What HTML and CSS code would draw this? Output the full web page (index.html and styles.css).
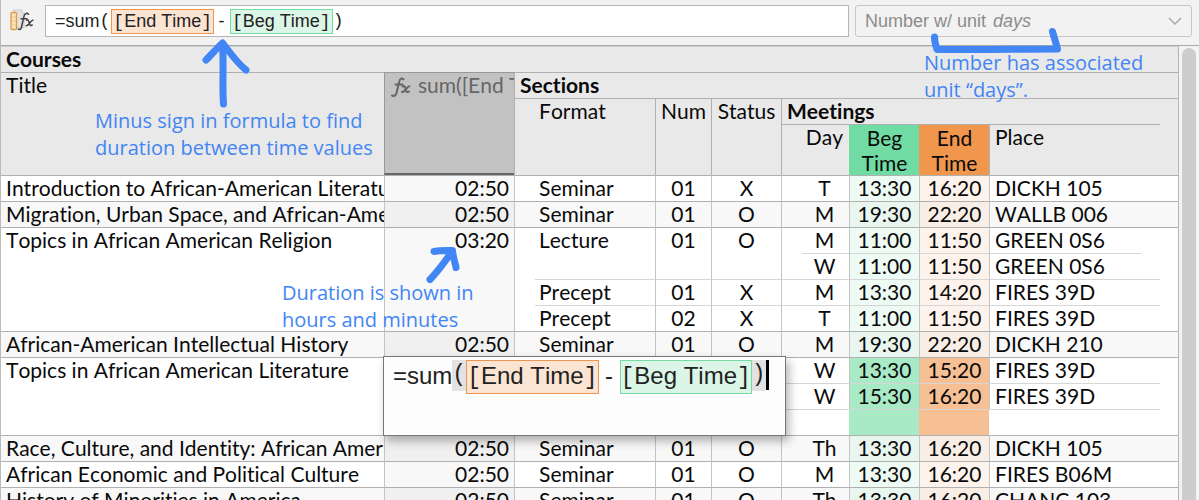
FILE: index.html
```html
<!DOCTYPE html>
<html lang="en">
<head>
<meta charset="utf-8">
<title>Courses</title>
<link rel="stylesheet" href="styles.css">
</head>
<body>
<div class="app">
  <header class="toolbar">
    <svg class="fx-icon" viewBox="0 0 24 24" aria-hidden="true">
      <path d="M3 1h9v3h2v15H6" fill="#e2e2e2" stroke="#c8c8c8"/>
      <rect x="1" y="3.500" width="5.500" height="17" rx="1" fill="#fbe3b4" stroke="#d99b45" stroke-width="1.300"/>
      <path d="M2 8h4M2 12h4M2 16h4" stroke="#efc98c"/>
      <path d="M18.500 5.200c-1.500-1.600-3.700-1-4.500 2L11.500 18c-.6 2.500-1.800 3-3.200 2.200M11 9.800h6" fill="none" stroke="#444" stroke-width="1.500" stroke-linecap="round"/>
      <path d="M16.500 11.200c1.500-1 2 0 2.500 2.300s1 3.700 3.200 2.500M23 11.200c-2-.8-3.800 5.700-6.800 5.500" fill="none" stroke="#444" stroke-width="1.500" stroke-linecap="round"/>
    </svg>
    <div class="formula bar-formula" role="textbox" contenteditable="true" spellcheck="false" aria-label="Formula"><span>=sum</span><span class="mono">(</span><span class="chip end"><span class="mono">[</span>End Time<span class="mono">]</span></span><span class="minus">-</span><span class="chip beg"><span class="mono">[</span>Beg Time<span class="mono">]</span></span><span class="mono">)</span></div>
    <div class="unit">
      <select aria-label="Number format"><option>Number w/ unit</option></select>
      <em>days</em>
      <svg class="chevron" viewBox="0 0 14 8" aria-hidden="true"><path d="M1 1l6 6 6-6" fill="none" stroke="#aaa" stroke-width="1.500"/></svg>
    </div>
  </header>

  <main class="sheet">
    <table>
      <colgroup><col class="w-title"><col class="w-sum"><col class="w-format"><col class="w-num"><col class="w-status"><col class="w-day"><col class="w-time"><col class="w-time"><col></colgroup>
      <thead>
        <tr><th colspan="9" class="group">Courses</th></tr>
        <tr><th rowspan="3">Title</th><th rowspan="3" class="sum"><div class="clip"><svg class="fx" viewBox="0 0 20 22" aria-hidden="true"><path d="M12.500 3.300c-1.500-1.700-3.600-.8-4.300 2.500L5.500 17c-.6 2.800-2.200 3.600-4.500 2.500M4.500 8.500h7" fill="none" stroke="#666" stroke-width="2" stroke-linecap="round"/><path d="M11.500 10.500c2-1 2.500 0 3 2.500s1.500 4 3.500 2.500M18.500 10.300c-2.300-.6-4.300 6-7.500 5.700" fill="none" stroke="#666" stroke-width="2" stroke-linecap="round"/></svg>sum([End Time]</div></th><th colspan="7" class="group">Sections</th></tr>
        <tr><th rowspan="2" class="format">Format</th><th rowspan="2" class="mid">Num</th><th rowspan="2" class="mid">Status</th><th colspan="4" class="group">Meetings</th></tr>
        <tr class="leaf"><th class="day">Day</th><th class="beg">Beg Time</th><th class="end">End Time</th><th class="place short">Place</th></tr>
      </thead>
      <tbody>
        <tr><td>Introduction to African-American Literature</td><td class="sum">02:50</td><td class="format">Seminar</td><td class="mid">01</td><td class="mid">X</td><td class="day">T</td><td class="beg">13:30</td><td class="end">16:20</td><td>DICKH 105</td></tr>
      </tbody>
      <tbody class="alt">
        <tr><td>Migration, Urban Space, and African-American Literature</td><td class="sum">02:50</td><td class="format">Seminar</td><td class="mid">01</td><td class="mid">O</td><td class="day">M</td><td class="beg">19:30</td><td class="end">22:20</td><td>WALLB 006</td></tr>
      </tbody>
      <tbody>
        <tr><td rowspan="4">Topics in African American Religion</td><td rowspan="4" class="sum">03:20</td><td rowspan="2" class="format">Lecture</td><td rowspan="2" class="mid">01</td><td rowspan="2" class="mid">O</td><td class="day">M</td><td class="beg">11:00</td><td class="end">11:50</td><td>GREEN 0S6</td></tr>
        <tr class="inner"><td class="day inset">W</td><td class="beg">11:00</td><td class="end">11:50</td><td class="shorter">GREEN 0S6</td></tr>
        <tr class="inner"><td class="format inset">Precept</td><td class="mid">01</td><td class="mid">X</td><td class="day">M</td><td class="beg">13:30</td><td class="end">14:20</td><td class="short">FIRES 39D</td></tr>
        <tr class="inner"><td class="format inset">Precept</td><td class="mid">02</td><td class="mid">X</td><td class="day">T</td><td class="beg">11:00</td><td class="end">11:50</td><td class="short">FIRES 39D</td></tr>
      </tbody>
      <tbody class="alt">
        <tr><td>African-American Intellectual History</td><td class="sum">02:50</td><td class="format">Seminar</td><td class="mid">01</td><td class="mid">O</td><td class="day">M</td><td class="beg">19:30</td><td class="end">22:20</td><td>DICKH 210</td></tr>
      </tbody>
      <tbody class="current">
        <tr><td rowspan="3">Topics in African American Literature</td><td rowspan="3" class="sum"></td><td class="format"></td><td class="mid"></td><td class="mid"></td><td class="day">W</td><td class="beg">13:30</td><td class="end">15:20</td><td>FIRES 39D</td></tr>
        <tr class="inner"><td class="format inset"></td><td class="mid"></td><td class="mid"></td><td class="day">W</td><td class="beg">15:30</td><td class="end">16:20</td><td class="short">FIRES 39D</td></tr>
        <tr class="inner blank"><td class="format inset"></td><td class="mid"></td><td class="mid"></td><td class="day"></td><td class="beg"></td><td class="end"></td><td class="short"></td></tr>
      </tbody>
      <tbody class="alt">
        <tr><td>Race, Culture, and Identity: African American History</td><td class="sum">02:50</td><td class="format">Seminar</td><td class="mid">01</td><td class="mid">O</td><td class="day">Th</td><td class="beg">13:30</td><td class="end">16:20</td><td>DICKH 105</td></tr>
      </tbody>
      <tbody>
        <tr><td>African Economic and Political Culture</td><td class="sum">02:50</td><td class="format">Seminar</td><td class="mid">01</td><td class="mid">O</td><td class="day">M</td><td class="beg">13:30</td><td class="end">16:20</td><td>FIRES B06M</td></tr>
      </tbody>
      <tbody class="alt">
        <tr><td>History of Minorities in America</td><td class="sum">02:50</td><td class="format">Seminar</td><td class="mid">01</td><td class="mid">O</td><td class="day">Th</td><td class="beg">13:30</td><td class="end">16:20</td><td>CHANC 103</td></tr>
      </tbody>
    </table>
    <div class="scrollbar" aria-hidden="true"><div class="thumb"></div></div>
  </main>

  <div class="formula popup" role="textbox" contenteditable="true" spellcheck="false" aria-label="Cell formula"><span>=sum</span><span class="mono match">(</span><span class="chip end"><span class="mono">[</span>End Time<span class="mono">]</span></span><span class="minus">-</span><span class="chip beg"><span class="mono">[</span>Beg Time<span class="mono">]</span></span><span class="mono match">)</span><span class="caret"></span></div>

  <svg class="strokes" width="1200" height="500" viewBox="0 0 1200 500" aria-hidden="true">
    <g fill="none" stroke="#4285f4" stroke-width="7" stroke-linecap="round" stroke-linejoin="round">
      <path d="M223.500 104C222 84 224 66 222.500 44M206 60C212 54 218 47 222.500 43C229 51 236 62 246 70"/>
      <path d="M430 279.500C440 269 446 260 452 251.500M434 251.500C441 250 446 250.500 452.500 250.500C453 257 455 262 456 267.500"/>
      <path d="M934.500 37C934.500 42 935.500 45 937 49.500C970 50 1020 49 1057.500 49C1056 43 1054 37 1052.500 31.500"/>
    </g>
  </svg>
  <p class="note note-minus">Minus sign in formula to find<br>duration between time values</p>
  <p class="note note-unit">Number has associated<br>unit “days”.</p>
  <p class="note note-duration">Duration is shown in<br>hours and minutes</p>
</div>
</body>
</html>
```
FILE: styles.css
```css
* { box-sizing: border-box; }
body { margin: 0; font-family: Lato, sans-serif; font-size: 21px; line-height: 24px; color: #0a0a0a; background: #f2f2f2; font-kerning: none; font-variant-ligatures: none; }
.app { position: relative; height: 100vh; overflow: hidden; display: flex; flex-direction: column; border-left: 1px solid #bbb; border-right: 1px solid #d4d4d4; }

.toolbar { flex: none; display: flex; gap: 6px; height: 45px; padding: 5px 7px 8px 9px; }
.fx-icon { flex: none; width: 24px; height: 24px; margin: 4px 5px 0 0; }
.formula { font-family: "Liberation Sans", sans-serif; color: #222; white-space: pre; outline: none; display: flex; }
.mono { font-family: "Liberation Mono", monospace; }
.chip { border: 1px solid; padding: 0 1px; }
.chip.end { background: #fce4d2; border-color: #f0954f; }
.chip.beg { background: #dbf6e6; border-color: #72dca3; }
.minus { text-align: center; }
.bar-formula { flex: 1; align-items: center; background: #fff; border: 1px solid #b5b5b5; padding: 0 9px; font-size: 18px; line-height: 22px; }
.bar-formula .chip { margin-left: 1px; }
.bar-formula .minus { width: 15px; }
.unit { display: flex; align-items: center; gap: 6px; width: 337px; padding: 0 9px; border: 1px solid #c6c6c6; border-radius: 3px; color: #8c8c8c; font: 18px/22px "Liberation Sans", sans-serif; }
.unit select { appearance: none; border: 0; padding: 0; margin: 0; background: none; color: inherit; font: inherit; }
.chevron { width: 14px; height: 8px; margin-left: auto; }

.sheet { flex: 1; min-height: 0; display: flex; align-items: flex-start; border-top: 1px solid #a8a8a8; }
table { flex: 1; width: 0; table-layout: fixed; border-collapse: separate; border-spacing: 0; border-right: 1px solid #b5b5b5; background: #fff; }
.w-title { width: 383px; }
.w-sum { width: 130px; }
.w-format { width: 141px; }
.w-num { width: 56px; }
.w-status { width: 70px; }
.w-day { width: 68px; }
.w-time { width: 70px; }
tr { height: 26px; }
th, td { padding: 0 5px; text-align: left; vertical-align: top; font-weight: 400; border-top: 1px solid #b0b0b0; border-left: 1px solid #c4c4c4; overflow: hidden; white-space: nowrap; }
th:first-child:not(.format):not(.day), td:first-child:not(.format):not(.day) { border-left: 0; }
th { background: #e9e9e9; border-left-color: #b0b0b0; }
.group { font-weight: 700; }
tr:first-child > th.group { border-top-color: #d0d0d0; }
.mid { text-align: center; }
.format { padding-left: 24px; }
th.sum { background: #c2c2c2; color: #666; border-color: #999; border-bottom: 2px solid #666; padding: 0 0 0 6px; }
.clip { overflow: hidden; }
.fx { width: 20px; height: 22px; margin-right: 7px; vertical-align: -5px; }
th.day { text-align: right; padding-right: 6px; }
th.beg, th.end { text-align: center; white-space: normal; line-height: 25px; padding: 0 8px; border-left-color: transparent; }
th.beg { background: #70dca3; }
th.end { background: #f1964d; }

td.sum { background: #f8f8f8; text-align: right; }
td.day { text-align: center; padding-left: 23px; }
td.beg, td.end { text-align: center; }
td.beg { background: #eefaf4; }
td.end { background: #fef2ec; }
.alt td { background: #f8f8f8; }
.alt td.sum { background: #f0f0f0; }
.alt td.beg { background: #e9f5ef; }
.alt td.end { background: #f8eee6; }
.current td.beg { background: #a8eac6; }
.current td.end { background: #f7bf94; }
.current .blank td { border-left-color: transparent; }
.inner td { border-top-color: #d6d6d6; }
.inner td.inset { border-top: 0; padding-top: 1px; background: linear-gradient(#d6d6d6, #d6d6d6) 20px 0 / 100% 1px no-repeat; }
.inner td.short, .inner td.shorter { border-top: 0; padding-top: 1px; background: linear-gradient(#d6d6d6, #d6d6d6) -18px 0 / 100% 1px no-repeat; }
.inner td.shorter { background-position: -37px 0; }
th.short { border-top: 0; padding-top: 1px; background: linear-gradient(#b0b0b0, #b0b0b0) -18px 0 / 100% 1px no-repeat #e9e9e9; }

.scrollbar { align-self: stretch; width: 20px; padding: 2px 3px 0; background: #f3f3f3; }
.thumb { height: 100%; border-radius: 7px 7px 0 0; background: #cdcdcd; }

.popup { position: absolute; left: 382px; top: 356px; width: 403px; height: 80px; align-items: flex-start; padding: 3px 9px; background: #fdfdfd; border: 1px solid #777; box-shadow: 3px 5px 9px rgba(0, 0, 0, .3); font-size: 24px; line-height: 29px; }
.popup > span { line-height: 31px; }
.popup > .chip { line-height: 29px; padding: 0; }
.popup .mono { font-size: 23px; }
.popup .minus { width: 21px; }
.match { background: #e2e2e2; }
.caret { width: 3px; height: 30px; background: #000; }

.strokes { position: absolute; left: -1px; top: 0; }
.note { position: absolute; margin: 0; color: #4285f4; font: 20px/27px "Open Sans", sans-serif; white-space: nowrap; }
.note-minus { left: 94px; top: 107px; }
.note-unit { left: 923px; top: 49px; }
.note-duration { left: 281px; top: 279px; }
```
